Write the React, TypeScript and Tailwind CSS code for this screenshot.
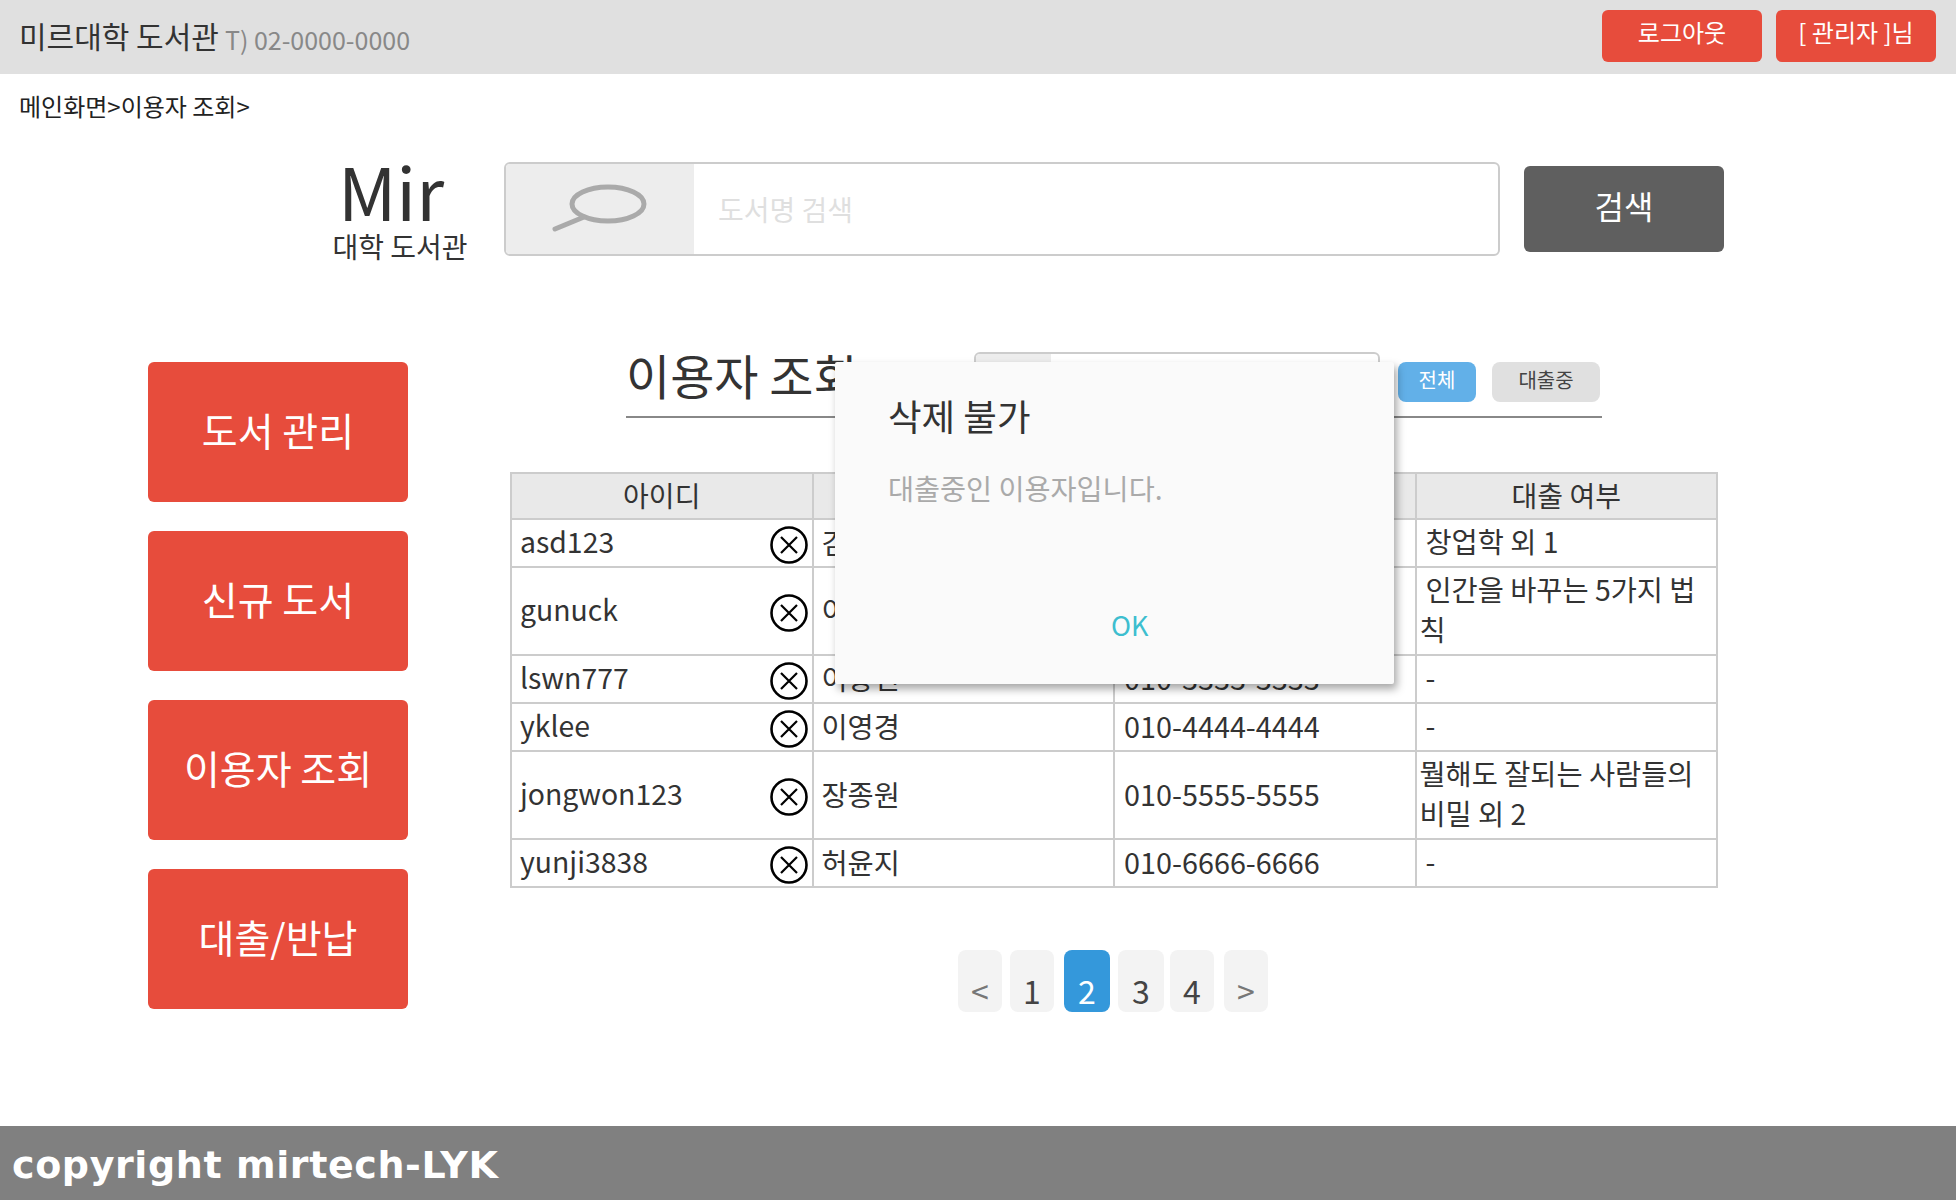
const users = [
  { id: 'asd123', name: '김철수', phone: '010-1111-1111', book: '창업학 외 1', indent: true, h: 'h-[48px]' },
  { id: 'gunuck', name: '이건욱', phone: '010-2222-2222', book: '인간을 바꾸는 5가지 법칙', indent: true, h: 'h-[88px]' },
  { id: 'lswn777', name: '이상민', phone: '010-3333-3333', book: '-', indent: true, h: 'h-[48px]' },
  { id: 'yklee', name: '이영경', phone: '010-4444-4444', book: '-', indent: true, h: 'h-[48px]' },
  { id: 'jongwon123', name: '장종원', phone: '010-5555-5555', book: '뭘해도 잘되는 사람들의 비밀 외 2', indent: false, h: 'h-[88px]' },
  { id: 'yunji3838', name: '허윤지', phone: '010-6666-6666', book: '-', indent: true, h: 'h-[48px]' },
];

const menus = ['도서 관리', '신규 도서', '이용자 조회', '대출/반납'];

function DeleteIcon() {
  return (
    <svg width="38" height="38" viewBox="0 0 38 38" fill="none" stroke="#000" className="mt-[4px] shrink-0">
      <circle cx="19" cy="19" r="17.5" strokeWidth="2.6" />
      <path d="M11 11L27 27M27 11L11 27" strokeWidth="2.2" />
    </svg>
  );
}

function SearchGlass() {
  return (
    <svg width="96" height="50" viewBox="0 0 96 50" fill="none" stroke="#aaa" strokeWidth="5" strokeLinecap="round">
      <ellipse cx="56" cy="22" rx="36" ry="17" />
      <path d="M32 35L3 47" />
    </svg>
  );
}

function PageButton({ label, width, active, muted }: { label: string; width: string; active?: boolean; muted?: boolean }) {
  return (
    <button
      className={`h-[62px] ${width} rounded-[8px] flex items-end justify-center pb-0 text-[32px] leading-[44px] ${
        active ? 'bg-[#3498db] text-white' : muted ? 'bg-[#f3f3f3] text-[#777]' : 'bg-[#f3f3f3] text-[#444]'
      }`}
    >
      {label}
    </button>
  );
}

export default function App() {
  return (
    <div className="relative flex flex-col h-[1200px] bg-white text-[#333] font-['Noto_Sans_CJK_KR',sans-serif] overflow-hidden">
      <header className="h-[74px] bg-[#e0e0e0] flex items-center justify-between pl-[19px] pr-[20px]">
        <div className="flex items-baseline gap-[6px] mt-[-2px]">
          <span className="text-[30px] leading-[40px] text-[#333]">미르대학 도서관</span>
          <span className="text-[25px] text-[#888] translate-y-[2px]">T) 02-0000-0000</span>
        </div>
        <div className="flex gap-[14px] mt-[-2px]">
          <button className="w-[160px] h-[52px] rounded-[6px] bg-[#e74c3c] text-white text-[24px] pb-[8px]">로그아웃</button>
          <button className="w-[160px] h-[52px] rounded-[6px] bg-[#e74c3c] text-white text-[24px] pb-[8px]">[ 관리자 ]님</button>
        </div>
      </header>

      <div className="pl-[19px] pt-[15px] text-[24px] leading-[34px] text-[#222]">메인화면&gt;이용자 조회&gt;</div>

      <div className="flex items-center mt-[36px] pl-[332px]">
        <div className="w-[136px] flex flex-col items-center">
          <span className="text-[72px] leading-[66px] font-normal mr-[18px] mt-[-2px]">Mir</span>
          <span className="text-[28px] leading-[36px] mt-[5px] mb-[-5px]">대학 도서관</span>
        </div>
        <div className="ml-[36px] w-[996px] h-[94px] flex border-2 border-[#ccc] rounded-[6px] overflow-hidden">
          <div className="w-[188px] bg-[#ededed] flex items-center justify-center pb-[4px]">
            <SearchGlass />
          </div>
          <div className="flex-1 flex items-center pl-[24px] text-[28px] text-[#dfdfdf]">도서명 검색</div>
        </div>
        <button className="ml-[24px] w-[200px] h-[86px] rounded-[6px] bg-[#5f5f5f] text-white text-[32px] pb-[8px]">검색</button>
      </div>

      <main className="flex pl-[148px] mt-[93px]">
        <nav className="w-[260px] flex flex-col gap-[29px] mt-[10px]">
          {menus.map((m) => (
            <button key={m} className="h-[140px] rounded-[6px] bg-[#e74c3c] text-white text-[39px] pb-[6px]">
              {m}
            </button>
          ))}
        </nav>

        <section className="ml-[102px] w-[1208px]">
          <div className="ml-[116px] w-[976px] h-[66px] flex border-b-2 border-[#888]">
            <h1 className="w-[348px] text-[48px] leading-[50px] mt-[-3px] h-[50px] text-[#333]">이용자 조회</h1>
            <div className="w-[406px] h-[60px] border-2 border-[#ccc] rounded-[6px] overflow-hidden flex">
              <div className="w-[75px] bg-[#ededed]" />
            </div>
            <button className="ml-[18px] mt-[10px] w-[78px] h-[40px] rounded-[8px] bg-[#62b0e8] text-white text-[20px] pb-[4px]">전체</button>
            <button className="ml-[16px] mt-[10px] w-[108px] h-[40px] rounded-[8px] bg-[#e0e0e0] text-[#444] text-[20px] pb-[4px]">대출중</button>
          </div>

          <table className="mt-[54px] w-[1208px] table-fixed border-collapse text-[28.4px] leading-[40px]">
            <thead>
              <tr className="h-[46px] bg-[#e9e9e9]">
                {['아이디', '이름', '전화번호', '대출 여부'].map((h) => (
                  <th key={h} className="border-2 border-[#ccc] font-normal text-[28px] p-0 pb-[2px]">
                    {h}
                  </th>
                ))}
              </tr>
            </thead>
            <tbody>
              {users.map((u) => (
                <tr key={u.id} className={u.h}>
                  <td className="border-2 border-[#ccc] pl-[8px] pr-[4px] py-0">
                    <div className="flex items-center justify-between">
                      <span className="mb-[4px]">{u.id}</span>
                      <DeleteIcon />
                    </div>
                  </td>
                  <td className="border-2 border-[#ccc] pl-[8px] py-0 pb-[2px]">{u.name}</td>
                  <td className="border-2 border-[#ccc] pl-[9px] py-0 pb-[2px] text-[28.8px]">{u.phone}</td>
                  <td className={`border-2 border-[#ccc] pl-[3px] pr-[8px] py-0 pb-[4px] ${u.indent ? 'indent-[6px]' : ''}`}>{u.book}</td>
                </tr>
              ))}
            </tbody>
          </table>

          <div className="mt-[62px] ml-[448px] flex">
            <PageButton label="<" width="w-[44px]" muted />
            <div className="ml-[8px]"><PageButton label="1" width="w-[44px]" /></div>
            <div className="ml-[10px]"><PageButton label="2" width="w-[46px]" active /></div>
            <div className="ml-[8px]"><PageButton label="3" width="w-[46px]" /></div>
            <div className="ml-[6px]"><PageButton label="4" width="w-[44px]" /></div>
            <div className="ml-[10px]"><PageButton label=">" width="w-[44px]" muted /></div>
          </div>
        </section>
      </main>

      <footer className="mt-auto h-[74px] bg-[#808080] flex items-center pl-[12px] pt-[5px] text-white font-bold text-[38px] font-['DejaVu_Sans',sans-serif] tracking-[0.6px]">
        copyright mirtech-LYK
      </footer>

      <div className="absolute left-[835px] top-[362px] w-[559px] h-[322px] bg-[#fafafa] shadow-[3px_5px_8px_rgba(0,0,0,0.35)] rounded-[2px]">
        <h2 className="absolute left-[53px] top-[29px] text-[36.5px] leading-[50px] text-[#333]">삭제 불가</h2>
        <p className="absolute left-[53px] top-[106px] text-[28.3px] leading-[40px] text-[#aaa]">대출중인 이용자입니다.</p>
        <button className="absolute left-[276px] top-[241px] text-[27px] leading-[44px] text-[#3dbecf]">OK</button>
      </div>
    </div>
  );
}
